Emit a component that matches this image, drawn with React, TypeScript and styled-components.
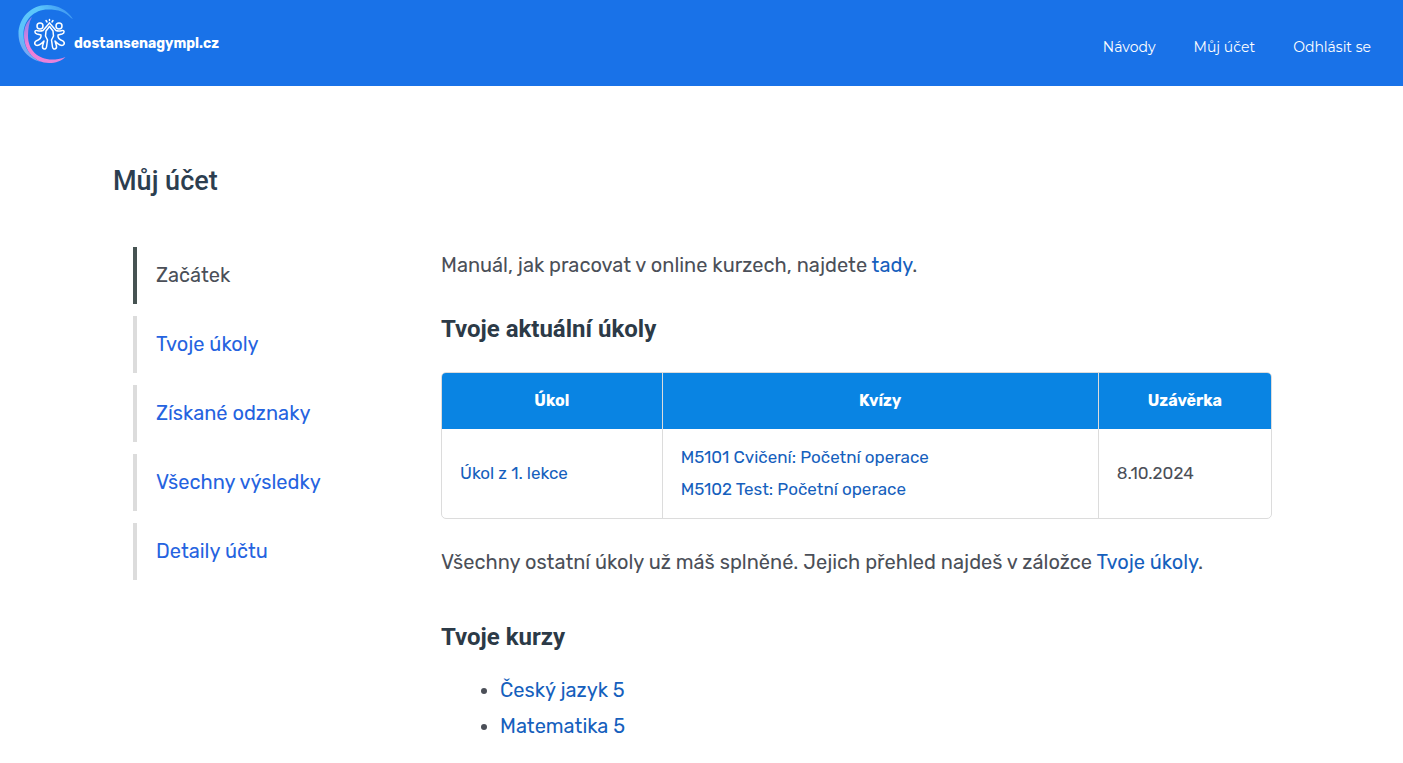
import React from "react";
import styled, { createGlobalStyle } from "styled-components";

const GlobalStyle = createGlobalStyle`
  *, *::before, *::after { box-sizing: border-box; }
  body {
    margin: 0;
    background: #fff;
    color: #4b4f58;
    font-family: Rubik, Roboto, "Liberation Sans", sans-serif;
    font-size: 20px;
    font-weight: 400;
    line-height: 36px;
  }
  a { text-decoration: none; }
`;

const Header = styled.header`
  display: flex;
  justify-content: space-between;
  align-items: flex-start;
  height: 86px;
  padding: 5px 32px 0 18px;
  background: #1972e8;
`;

const Brand = styled.a`
  display: flex;
  align-items: center;
  color: #fff;
  font-family: Rubik, Lato, sans-serif;
  font-size: 14px;
  font-weight: 700;
  line-height: 20px;
`;

const BrandName = styled.span`
  padding-top: 18px;
`;

const Nav = styled.nav`
  display: flex;
  gap: 38px;
  padding-top: 32px;
`;

const NavLink = styled.a`
  color: #fff;
  font-family: Montserrat, Inter, sans-serif;
  font-size: 14px;
  font-weight: 400;
  line-height: 20px;
`;

const Page = styled.main`
  max-width: 1177px;
  margin: 0 auto;
  padding: 76px 0 16px;
`;

const Title = styled.h1`
  margin: 0 0 47px;
  color: #2c3e50;
  font-family: Roboto, sans-serif;
  font-size: 27px;
  font-weight: 500;
  line-height: 38px;
`;

const Columns = styled.div`
  display: grid;
  grid-template-columns: 288px minmax(0, 1fr);
  gap: 20px;
  padding: 0 18px 0 20px;
`;

const Menu = styled.ul`
  display: flex;
  flex-direction: column;
  gap: 12px;
  margin: 0;
  padding: 0;
  list-style: none;
`;

const MenuLink = styled.a<{ $active?: boolean }>`
  display: block;
  padding: 10px 19px 11px;
  border-left: 4px solid ${(p) => (p.$active ? "#465352" : "#dcdcdc")};
  color: ${(p) => (p.$active ? "#4b4f58" : "#2563e0")};
`;

const Content = styled.section`
  min-width: 0;
`;

const Text = styled.p`
  margin: 0;
`;

const Link = styled.a`
  color: #1560bd;
`;

const Heading = styled.h2`
  margin: 30px 0 27px;
  color: #2c3a47;
  font-family: Roboto, sans-serif;
  font-size: 24px;
  font-weight: 700;
  line-height: 32px;
`;

const Table = styled.table`
  width: 100%;
  margin-bottom: 25px;
  border: 1px solid #dcdcdc;
  border-radius: 5px;
  border-spacing: 0;
  table-layout: fixed;
  overflow: hidden;
  font-size: 17px;
  line-height: 32px;
`;

const HeadCell = styled.th<{ $width: string }>`
  width: ${(p) => p.$width};
  height: 56px;
  padding: 0;
  background: #0984e3;
  color: #fff;
  font-size: 16px;
  font-weight: 700;
  & + & { border-left: 1px solid #dcdcdc; }
`;

const Cell = styled.td`
  height: 89px;
  padding: 11px 18px 13px;
  & + & { border-left: 1px solid #dcdcdc; }
`;

const QuizLink = styled(Link)`
  display: block;
`;

const Courses = styled.ul`
  margin: 0;
  padding-left: 59px;
`;

const CoursesHeading = styled(Heading)`
  margin: 41px 0 19px;
`;

const Logo = () => (
  <svg width="56" height="60" viewBox="18 5 56 60" fill="none" aria-hidden="true">
    <defs>
      <linearGradient id="sky" x1="72" y1="14" x2="24" y2="56" gradientUnits="userSpaceOnUse">
        <stop offset="0" stopColor="#3f97f2" />
        <stop offset=".35" stopColor="#5cc8fb" />
        <stop offset=".8" stopColor="#5cc3fb" />
        <stop offset="1" stopColor="#7f9cf0" />
      </linearGradient>
      <linearGradient id="rose" x1="30" y1="18" x2="58" y2="62" gradientUnits="userSpaceOnUse">
        <stop offset="0" stopColor="#8f83ee" />
        <stop offset=".4" stopColor="#f07fd6" />
        <stop offset="1" stopColor="#e783dc" />
      </linearGradient>
    </defs>
    <path d="M73 19C67 10 58 5 47 5C31 5 18.500 18 18.500 34C18.500 48 28 59 41 62C30 57 23.500 47 23.500 34.500C23.500 20 34 9.500 48 9.500C58 9.500 66 12 71 18Z" fill="url(#sky)" />
    <path d="M32 17C27 21 24 27 24 35C24 51 35 63 49 63C56 63 61 61 65.500 57C61 59 56 59.500 52 59.500C38 59.500 28 50 28 36C28 29 29 22 32 17Z" fill="url(#rose)" />
    <g stroke="#fff" strokeWidth="1.500" strokeLinecap="round" strokeLinejoin="round">
      <circle cx="40" cy="26" r="3" />
      <circle cx="59" cy="26" r="3" />
      <path d="M49.500 23L43 30.500C40 31.500 39 31 37 30.500C34.500 30 34 33 37 34L41 35C41.500 38 39 40 36 41C33.500 43 35 46.500 39 45C42 44 43 42 44 41L42.500 46C42 49.500 46 50 46.500 47L47.500 40L45.500 36L46 31L49.500 26.500" />
      <path d="M49.500 23L56 30.500C59 31.500 60 31 62 30.500C64.500 30 65 33 62 34L58 35C57.500 38 60 40 63 41C65.500 43 64 46.500 60 45C57 44 56 42 55 41L56.500 46C57 49.500 53 50 52.500 47L51.500 40L53.500 36L53 31L49.500 26.500" />
      <path d="M49.500 19.500V20.500M46 20.500L47 22M53 20.500L52 22" />
    </g>
  </svg>
);

const menu = ["Začátek", "Tvoje úkoly", "Získané odznaky", "Všechny výsledky", "Detaily účtu"];
const quizzes = ["M5101 Cvičení: Početní operace", "M5102 Test: Početní operace"];
const courses = ["Český jazyk 5", "Matematika 5"];

export default function App() {
  return (
    <>
      <GlobalStyle />
      <Header>
        <Brand href="#">
          <Logo />
          <BrandName>dostansenagympl.cz</BrandName>
        </Brand>
        <Nav>
          <NavLink href="#">Návody</NavLink>
          <NavLink href="#">Můj účet</NavLink>
          <NavLink href="#">Odhlásit se</NavLink>
        </Nav>
      </Header>
      <Page>
        <Title>Můj účet</Title>
        <Columns>
          <nav>
            <Menu>
              {menu.map((label, i) => (
                <li key={label}>
                  <MenuLink href="#" $active={i === 0}>{label}</MenuLink>
                </li>
              ))}
            </Menu>
          </nav>
          <Content>
            <Text>
              Manuál, jak pracovat v online kurzech, najdete <Link href="#">tady</Link>.
            </Text>
            <Heading>Tvoje aktuální úkoly</Heading>
            <Table>
              <thead>
                <tr>
                  <HeadCell $width="26.5%">Úkol</HeadCell>
                  <HeadCell $width="52.6%">Kvízy</HeadCell>
                  <HeadCell $width="20.9%">Uzávěrka</HeadCell>
                </tr>
              </thead>
              <tbody>
                <tr>
                  <Cell><Link href="#">Úkol z 1. lekce</Link></Cell>
                  <Cell>
                    {quizzes.map((q) => (
                      <QuizLink href="#" key={q}>{q}</QuizLink>
                    ))}
                  </Cell>
                  <Cell>8.10.2024</Cell>
                </tr>
              </tbody>
            </Table>
            <Text>
              Všechny ostatní úkoly už máš splněné. Jejich přehled najdeš v záložce{" "}
              <Link href="#">Tvoje úkoly</Link>.
            </Text>
            <CoursesHeading>Tvoje kurzy</CoursesHeading>
            <Courses>
              {courses.map((c) => (
                <li key={c}><Link href="#">{c}</Link></li>
              ))}
            </Courses>
          </Content>
        </Columns>
      </Page>
    </>
  );
}
